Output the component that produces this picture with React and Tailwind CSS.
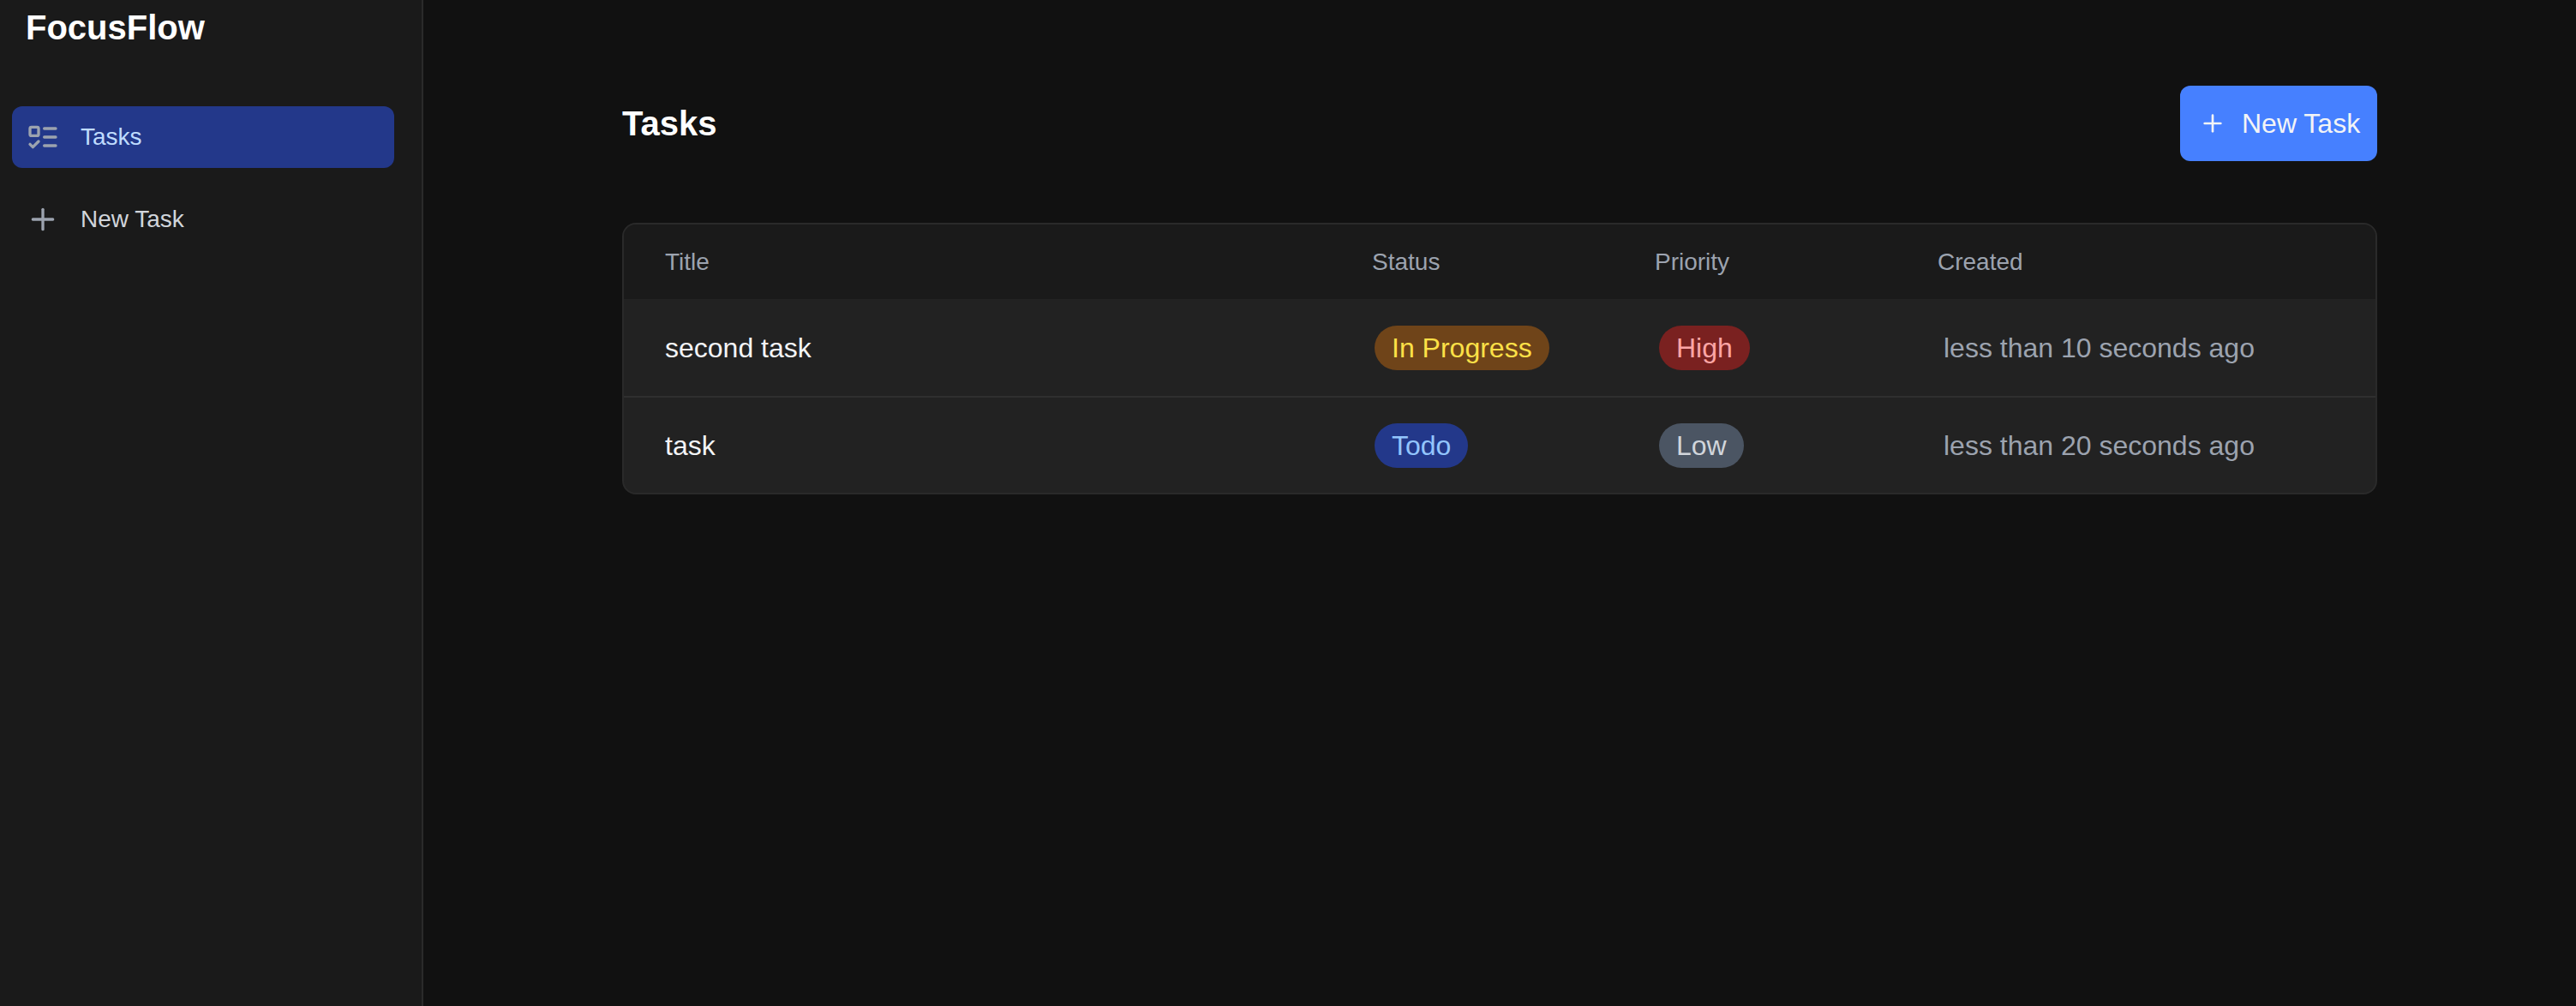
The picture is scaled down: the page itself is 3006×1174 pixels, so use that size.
import React from 'react'
import { Plus } from 'lucide-react'

const tasks = [
  {
    title: 'second task',
    status: 'In Progress',
    statusClass: 'bg-[#6f4419] text-[#fde047]',
    priority: 'High',
    priorityClass: 'bg-[#7a2120] text-[#fca5a5]',
    created: 'less than 10 seconds ago',
  },
  {
    title: 'task',
    status: 'Todo',
    statusClass: 'bg-[#23388a] text-[#93c5fd]',
    priority: 'Low',
    priorityClass: 'bg-[#4b5563] text-[#d1d5db]',
    created: 'less than 20 seconds ago',
  },
]

function TodoIcon() {
  return (
    <svg width="40" height="40" viewBox="0 0 24 24" fill="none" stroke="currentColor" strokeWidth="2" strokeLinecap="round" strokeLinejoin="round" className="text-[#9ca3af]">
      <rect x="3" y="5" width="6" height="6" rx="1" />
      <path d="m3 17 2 2 4-4" />
      <path d="M13 6h8" />
      <path d="M13 12h8" />
      <path d="M13 18h8" />
    </svg>
  )
}

function Badge({ className, children }) {
  return (
    <span className={`inline-flex h-[52px] items-center rounded-full px-5 text-[32px] ${className}`}>
      {children}
    </span>
  )
}

function Sidebar() {
  return (
    <aside className="h-full w-[494px] shrink-0 border-r-2 border-[#2a2a2a] bg-[#1a1a1a]">
      <div className="h-[124px] pl-[30px] pt-[9px] text-[40px] font-bold leading-[46px] text-white">FocusFlow</div>
      <nav className="ml-[14px] mr-[32px] flex flex-col gap-6">
        <a className="flex h-[72px] items-center gap-6 rounded-xl bg-[#23388a] pl-4 text-[28px] text-[#bfdbfe]">
          <TodoIcon />
          Tasks
        </a>
        <a className="flex h-[72px] items-center gap-6 rounded-xl pl-4 text-[28px] text-[#d1d5db]">
          <Plus size={40} className="text-[#9ca3af]" />
          New Task
        </a>
      </nav>
    </aside>
  )
}

export default function App() {
  return (
    <div className="flex h-screen overflow-hidden bg-[#111111] font-['Liberation_Sans',Arial,sans-serif]">
      <Sidebar />
      <main className="flex-1 pt-[100px]">
        <div className="mx-auto w-[2048px]">
          {/* Header */}
          <div className="flex h-[88px] items-center justify-between">
            <h1 className="text-[40px] font-bold text-white">Tasks</h1>
            <button className="flex h-[88px] w-[230px] items-center gap-[18px] rounded-xl bg-[#4680ff] pl-[22px] text-[32px] text-[#f3f4f6]">
              <Plus size={32} />
              New Task
            </button>
          </div>

          {/* Table */}
          <div className="mt-[72px] overflow-hidden rounded-2xl border-2 border-[#2a2a2a] bg-[#222222]">
            <div className="grid h-[87px] grid-cols-[825px_330px_330px_1fr] items-center bg-[#1a1a1a] text-[28px] text-[#9ca3af]">
              <div className="pl-12">Title</div>
              <div className="pl-12">Status</div>
              <div className="pl-12">Priority</div>
              <div className="pl-12">Created</div>
            </div>
            {tasks.map((task, i) => (
              <div
                key={task.title}
                className={`grid h-[113px] grid-cols-[828px_332px_332px_1fr] items-center text-[32px] ${i > 0 ? 'border-t-2 border-[#2f2f2f]' : ''}`}
              >
                <div className="pl-12 text-[#f3f4f6]">{task.title}</div>
                <div className="pl-12"><Badge className={task.statusClass}>{task.status}</Badge></div>
                <div className="pl-12"><Badge className={task.priorityClass}>{task.priority}</Badge></div>
                <div className="pl-12 text-[#9ca3af]">{task.created}</div>
              </div>
            ))}
          </div>
        </div>
      </main>
    </div>
  )
}
